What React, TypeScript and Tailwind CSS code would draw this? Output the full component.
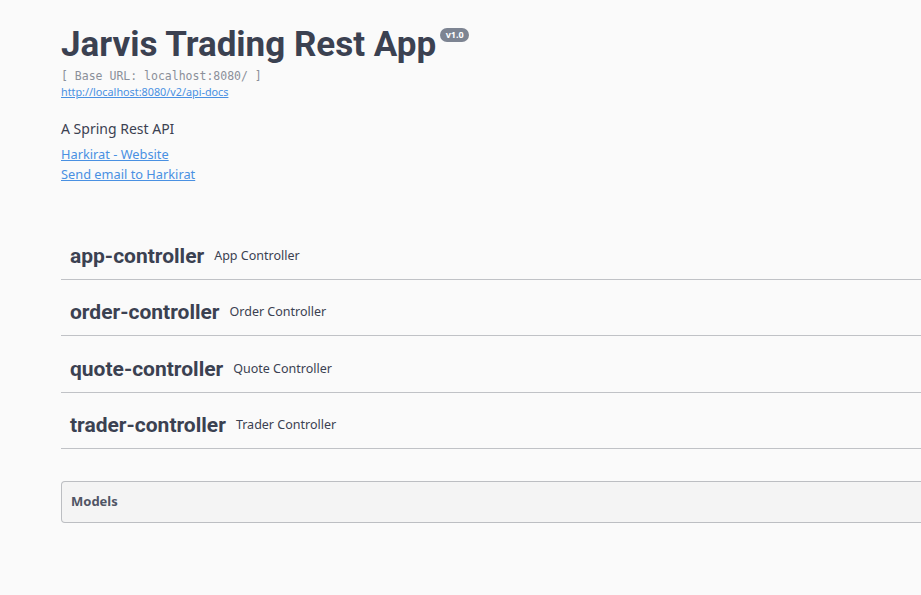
import React from "react";

const tags = [
  { name: "app-controller", desc: "App Controller" },
  { name: "order-controller", desc: "Order Controller" },
  { name: "quote-controller", desc: "Quote Controller" },
  { name: "trader-controller", desc: "Trader Controller" },
];

const head = { fontFamily: 'Roboto, "Noto Sans", sans-serif' };

export default function App() {
  return (
    <div
      className="min-h-[595px] w-full overflow-hidden bg-[#fafafa] text-[#3b4151]"
      style={{ fontFamily: '"Noto Sans", "Open Sans", sans-serif' }}
    >
      <div className="w-[1100px] pl-[61px]">
        <div className="pt-[25px]">
          <div className="flex items-start">
            <h2 className="m-0 text-[35px] font-bold leading-[40px] text-[#3b4151]" style={head}>
              Jarvis Trading Rest App
            </h2>
            <span className="relative top-[3px] ml-[4px] flex h-[14px] w-[29px] items-center justify-center rounded-full bg-[#7d8492] text-[9px] font-bold text-white">
              v1.0
            </span>
          </div>
          <pre
            className="m-0 mt-[4px] text-[11.5px] leading-[14px] text-[#8a8f99]"
            style={{ fontFamily: '"DejaVu Sans Mono", monospace' }}
          >
            [ Base URL: localhost:8080/ ]
          </pre>
          <a
            href="#"
            className="mt-[1px] block text-[10.8px] leading-[16px] text-[#4990e2] underline"
          >
            http://localhost:8080/v2/api-docs
          </a>
          <p className="m-0 mt-[19px] text-[14px] leading-[20px]">A Spring Rest API</p>
          <a href="#" className="mt-[5px] block text-[12.8px] leading-[20px] text-[#4990e2] underline">
            Harkirat - Website
          </a>
          <a href="#" className="block text-[12.8px] leading-[20px] text-[#4990e2] underline">
            Send email to Harkirat
          </a>
        </div>

        <div className="mt-[40px]">
          {tags.map((t) => (
            <div
              key={t.name}
              className="mb-[1px] flex h-[55.5px] items-center border-b border-[rgba(59,65,81,0.3)] pl-[9px] pt-[10px]"
            >
              <span className="text-[21px] font-bold text-[#3b4151]" style={head}>
                {t.name}
              </span>
              <span className="pl-[10px] text-[12.5px] text-[#3b4151]">{t.desc}</span>
            </div>
          ))}
        </div>

        <div className="mt-[32px] flex h-[42px] items-center rounded-[4px] border border-[rgba(59,65,81,0.3)] bg-[#f4f4f4] pl-[9px]">
          <span className="text-[13px] font-bold text-[#505565]">Models</span>
        </div>
      </div>
    </div>
  );
}
